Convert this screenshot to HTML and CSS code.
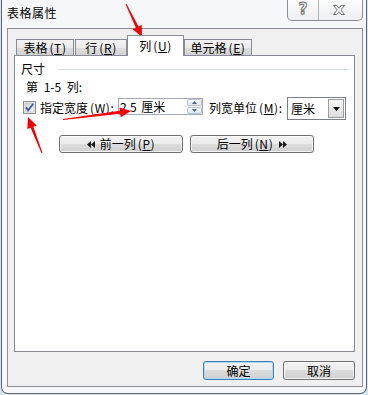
FILE: index.html
```html
<!DOCTYPE html>
<html lang="zh-CN">
<head>
<meta charset="utf-8">
<title>表格属性</title>
<link rel="stylesheet" href="styles.css">
</head>
<body>
<div class="frame">
  <div class="titlebar">
    <div class="title">表格属性</div>
    <div class="caption">
      <div class="cap help"><span class="qmark">?</span></div>
      <div class="cap close">
        <svg width="12" height="10" viewBox="0 0 12 10"><path d="M0.5 0.5H3.8L6 3.3L8.2 0.5H11.5L7.8 5L11.5 9.5H8.2L6 6.7L3.8 9.5H0.5L4.2 5Z" fill="#fff" stroke="#6d6f73" stroke-width="1"/></svg>
      </div>
    </div>
  </div>
  <div class="client">
    <div class="tabs">
      <div class="tab t1">表格<span class="mn">(<u>T</u>)</span></div>
      <div class="tab t2">行<span class="mn">(<u>R</u>)</span></div>
      <div class="tab t3 sel">列<span class="mn">(<u>U</u>)</span></div>
      <div class="tab t4">单元格<span class="mn">(<u>E</u>)</span></div>
    </div>
    <div class="panel">
      <div class="group-head"><span>尺寸</span><i class="rule"></i></div>
      <div class="cols">第 1-5 列:</div>
      <div class="width-row">
        <span class="check">
          <svg width="13" height="13" viewBox="0 0 13 13">
            <defs><linearGradient id="cb" x1="0" y1="0" x2="1" y2="1"><stop offset="0" stop-color="#cfd3da"/><stop offset="1" stop-color="#f6f6f6"/></linearGradient></defs>
            <rect x="0.5" y="0.5" width="12" height="12" fill="#f4f4f4" stroke="#8e8f8f"/>
            <rect x="2" y="2" width="9" height="9" fill="url(#cb)" stroke="#aeb3b9" stroke-width="0.6"/>
            <path d="M3 6.4L5.2 9.2L10.2 2.8" fill="none" stroke="#3b55a0" stroke-width="1.8"/>
          </svg>
        </span>
        <span class="lbl lbl-w">指定宽度<span class="mn">(<u>W</u>)</span>:</span>
        <div class="spin-input">
          <span class="val">2.5 厘米</span>
          <div class="spin">
            <span class="sb up"><svg width="5" height="3" viewBox="0 0 5 3"><path d="M0 3L2.5 0L5 3Z" fill="#4c6184"/></svg></span>
            <span class="sb dn"><svg width="5" height="3" viewBox="0 0 5 3"><path d="M0 0L2.5 3L5 0Z" fill="#4c6184"/></svg></span>
          </div>
        </div>
        <span class="lbl lbl-u">列宽单位<span class="mn">(<u>M</u>)</span>:</span>
        <div class="combo">
          <span class="combo-val">厘米</span>
          <span class="drop"><svg width="7" height="4" viewBox="0 0 7 4"><path d="M0 0H7L3.5 4Z" fill="#000"/></svg></span>
        </div>
      </div>
      <div class="nav-row">
        <button class="btn nav"><svg class="tri" width="8" height="7" viewBox="0 0 8 7"><path d="M4 0L0 3.5L4 7Z M8 0L4 3.5L8 7Z" fill="#1a1a1a"/></svg>前一列<span class="mn">(<u>P</u>)</span></button>
        <button class="btn nav">后一列<span class="mn">(<u>N</u>)</span><svg class="tri after" width="8" height="7" viewBox="0 0 8 7"><path d="M0 0L4 3.5L0 7Z M4 0L8 3.5L4 7Z" fill="#1a1a1a"/></svg></button>
      </div>
    </div>
    <div class="actions">
      <button class="btn act default">确定</button>
      <button class="btn act">取消</button>
    </div>
  </div>
</div>
<svg class="marks" width="368" height="395" viewBox="0 0 368 395">
  <polygon fill="#f40000" points="125.55,4.22 135.85,27.75 132.70,29.28 142,37 141.70,24.92 138.55,26.45 126.45,3.78"/>
  <polygon fill="#f40000" points="42.47,152.82 33.39,126.71 36.65,125.44 28,117 27.33,129.06 30.59,127.79 41.53,153.18"/>
  <polygon fill="#f40000" points="63.06,120.0 120.27,113.85 120.70,117.32 131,111 119.46,107.40 119.89,110.87 62.94,119.0"/>
</svg>
</body>
</html>
```

FILE: styles.css
```css
* { box-sizing: border-box; }
html, body { margin: 0; padding: 0; }
body {
  width: 368px;
  height: 395px;
  position: relative;
  overflow: hidden;
  background: #d6e5f2;
  font-family: "Noto Sans CJK SC", "Noto Sans", sans-serif;
  font-size: 12px;
  line-height: 14px;
  color: #000;
}
u { text-decoration: underline; text-underline-offset: 1px; }
.mn { padding-left: 2px; letter-spacing: 0.6px; }

.frame {
  width: 366px;
  height: 394px;
  margin-left: 1px;
  border: 1px solid #5f6469;
  border-top: none;
  border-radius: 0 0 7px 7px;
  background: #f6f7f9;
  padding: 0 3px 6px 5px;
  display: flex;
  flex-direction: column;
}

.titlebar {
  height: 28px;
  flex: none;
  display: flex;
  justify-content: space-between;
  align-items: flex-start;
}
.title {
  padding-top: 6px;
  letter-spacing: 0.5px;
  font-size: 12px;
  line-height: 14px;
}
.caption {
  display: flex;
  width: 76px;
  height: 21px;
  border: 1px solid #8b8e93;
  border-top: none;
  border-radius: 0 0 5px 5px;
  overflow: hidden;
  background: linear-gradient(#fdfdfd, #eceef1);
}
.cap {
  display: flex;
  align-items: center;
  justify-content: center;
}
.help {
  width: 31px;
  border-right: 1px solid #b0b3b8;
}
.close { flex: 1; padding-right: 3px; }
.qmark {
  font-family: "DejaVu Sans", sans-serif;
  font-weight: bold;
  font-size: 15px;
  line-height: 15px;
  color: #fff;
  -webkit-text-stroke: 1px #6d6f73;
  margin-top: -1px;
}

.client {
  flex: 1;
  border: 1px solid #8c9096;
  background: #f0f0f0;
  padding: 6px 7px 0 6px;
  display: flex;
  flex-direction: column;
}

.tabs {
  height: 20px;
  flex: none;
  display: flex;
  align-items: flex-end;
  padding-left: 2px;
  position: relative;
  z-index: 1;
}
.tab {
  height: 16px;
  border: 1px solid #898c95;
  border-bottom: none;
  background: linear-gradient(#f3f3f3 0%, #ebebeb 50%, #dedede 51%, #d2d2d2 100%);
  text-align: center;
  line-height: 15px;
  white-space: nowrap;
}
.t1 { width: 58px; margin-right: 1px; }
.t2 { width: 52px; }
.t3 { width: 57px; }
.t4 { width: 68px; }
.tab.sel {
  height: 21px;
  margin-bottom: -1px;
  background: #fff;
  padding-top: 3px;
  line-height: 14px;
}

.panel {
  flex: none;
  height: 297px;
  border: 1px solid #898c95;
  background: #fff;
  padding-top: 6px;
}
.group-head {
  display: flex;
  align-items: center;
  height: 14px;
  padding-left: 6px;
}
.rule {
  flex: 1;
  height: 1px;
  background: #d5dfe5;
  margin: 0 5px 0 13px;
}
.cols {
  margin-top: 4px;
  height: 14px;
  padding-left: 11px;
  word-spacing: 3px;
}

.width-row {
  margin-top: 3px;
  height: 23px;
  display: flex;
  align-items: flex-start;
}
.check {
  display: block;
  width: 13px;
  height: 13px;
  margin: 4px 0 0 8px;
}
.check svg { display: block; }
.lbl {
  display: block;
  margin-top: 4px;
  white-space: nowrap;
}
.lbl-w { width: 78px; margin-left: 4px; }
.lbl-u { width: 78px; margin-left: 6px; }

.spin-input {
  width: 85px;
  height: 17px;
  margin-top: 1px;
  border: 1px solid #a4abb4;
  background: #fff;
  display: flex;
  align-items: center;
  justify-content: space-between;
  padding: 0 0 0 1px;
}
.val { line-height: 14px; white-space: nowrap; word-spacing: 2px; }
.spin {
  width: 15px;
  height: 15px;
  display: flex;
  flex-direction: column;
  gap: 1px;
}
.sb {
  flex: 1;
  display: flex;
  align-items: center;
  justify-content: center;
  border: 1px solid #b9c3d0;
  border-radius: 2px;
  background: linear-gradient(#f4f7fb, #dfe6ef);
}
.sb svg { display: block; }

.combo {
  width: 59px;
  height: 23px;
  border: 1px solid #7a7e85;
  background: #fff;
  display: flex;
  align-items: center;
  justify-content: space-between;
  padding: 1px 1px 1px 3px;
}
.combo-val { line-height: 14px; }
.drop {
  width: 16px;
  height: 19px;
  border: 1px solid #9c9c9c;
  background: linear-gradient(#f6f6f6, #dcdcdc);
  display: flex;
  align-items: center;
  justify-content: center;
}
.drop svg { display: block; }

.nav-row {
  margin-top: 15px;
  display: flex;
  gap: 7px;
  padding-left: 44px;
}

.btn {
  font: inherit;
  font-size: 12px;
  line-height: 14px;
  color: #000;
  border: 1px solid #707070;
  border-radius: 3px;
  background: linear-gradient(#f2f2f2 0%, #ebebeb 49%, #dddddd 50%, #cfcfcf 100%);
  box-shadow: inset 0 0 0 1px rgba(255, 255, 255, 0.75);
  padding: 0;
  margin: 0;
  display: flex;
  align-items: center;
  justify-content: center;
  white-space: nowrap;
}
.nav { width: 124px; height: 18px; }
.tri { display: block; margin-right: 5px; }
.tri.after { margin-right: 0; margin-left: 6px; }

.actions {
  margin-top: 9px;
  display: flex;
  justify-content: flex-end;
  gap: 9px;
}
.act { height: 19px; }
.act.default { width: 71px; border-color: #3c7fb1; box-shadow: inset 0 0 0 1px #a6def9; }
.act:not(.default) { width: 72px; }

.marks {
  position: absolute;
  left: 0;
  top: 0;
  pointer-events: none;
}
```
